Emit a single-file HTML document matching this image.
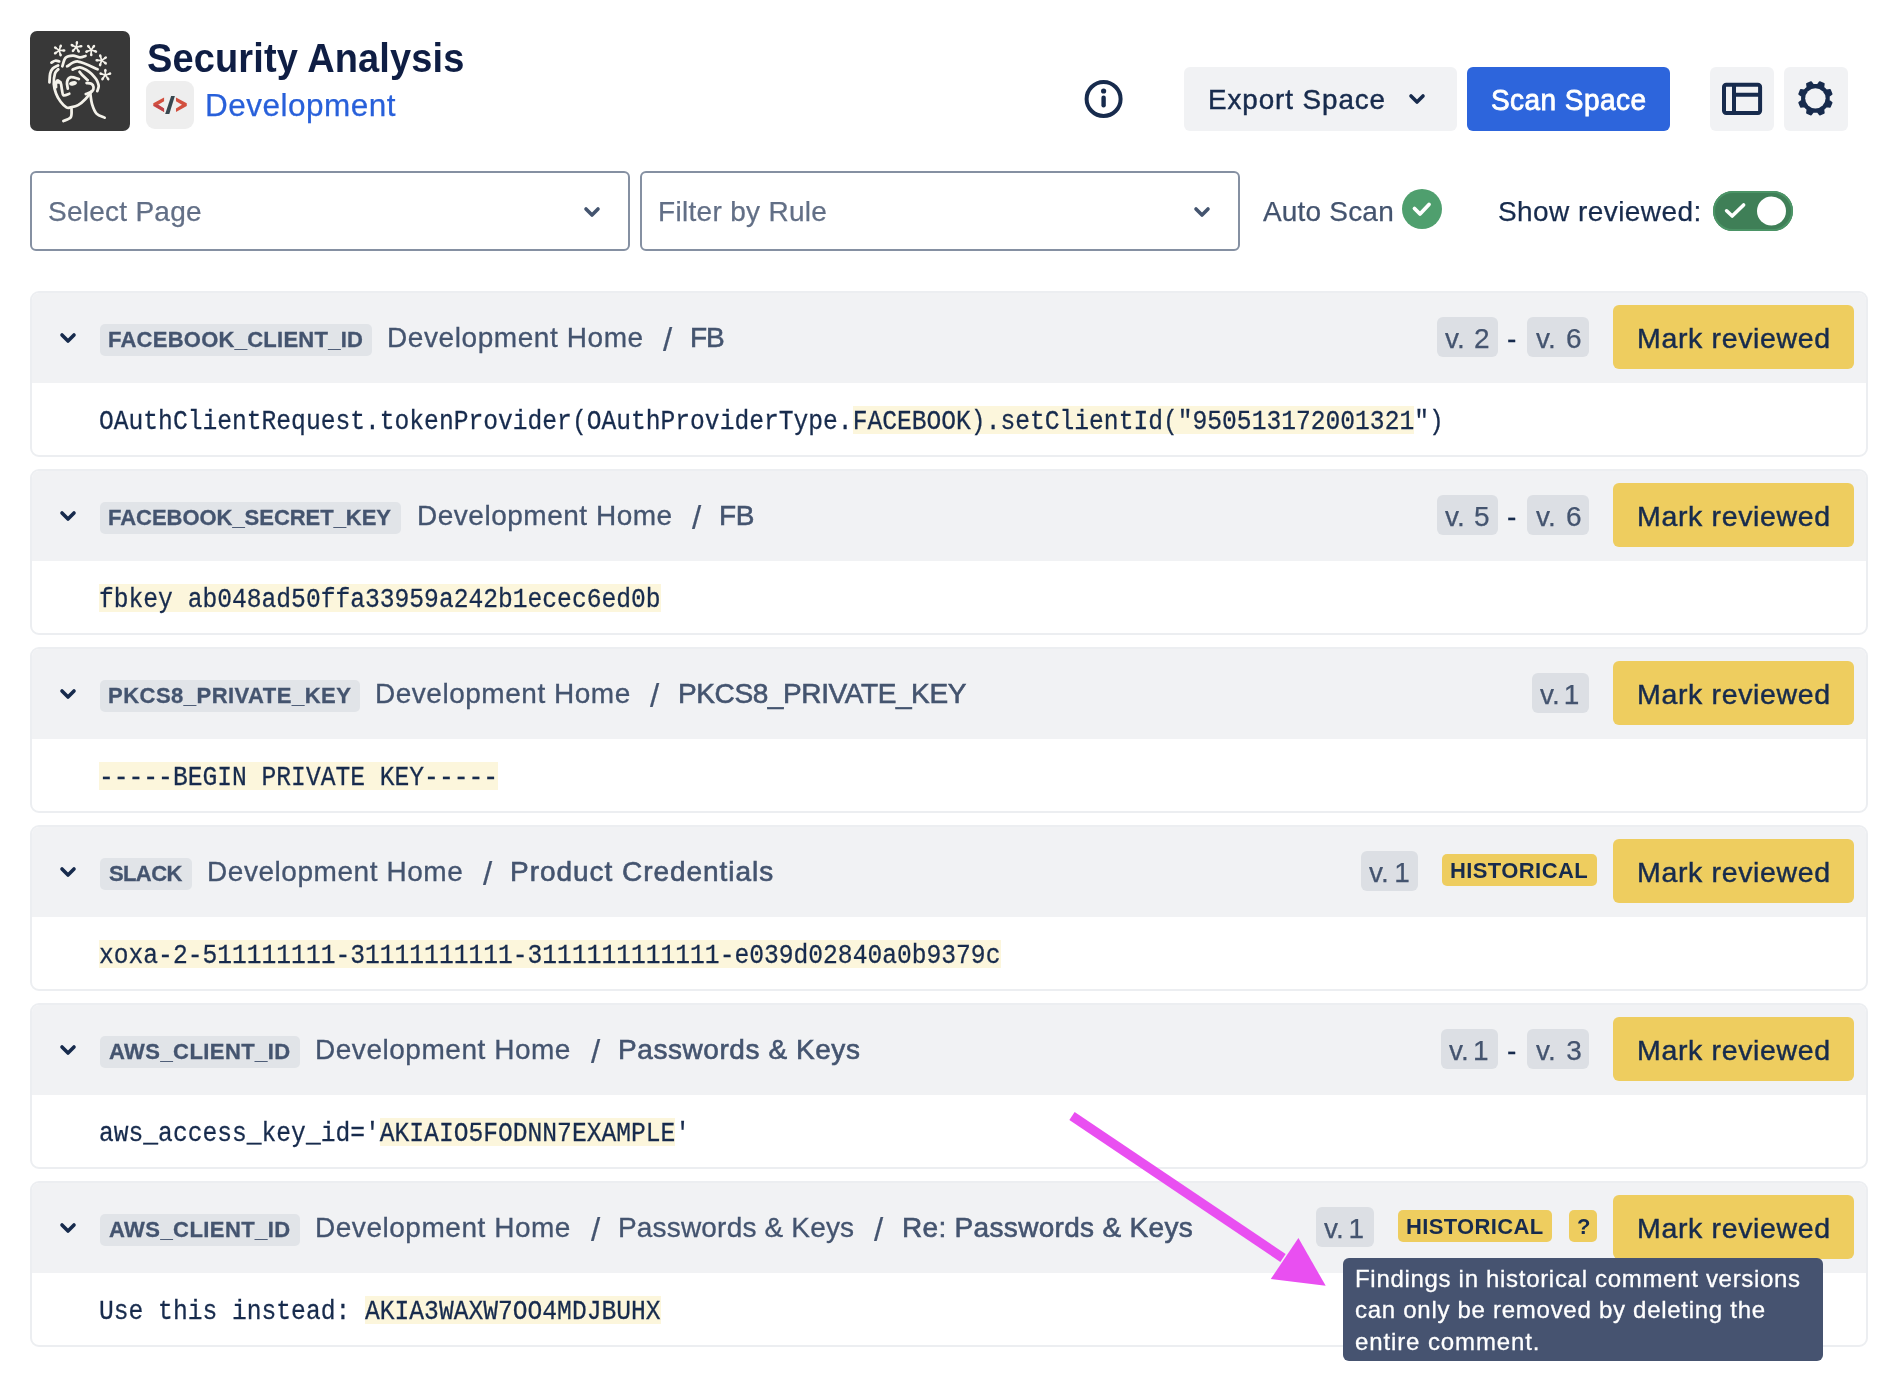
<!DOCTYPE html><html><head><meta charset="utf-8"><style>
*{margin:0;padding:0}
html,body{width:1902px;height:1398px;overflow:hidden;background:#fff}
body{position:relative;font-family:"Liberation Sans", sans-serif;}
.t{position:absolute;white-space:pre;will-change:transform}
.box{position:absolute}
svg{position:absolute}
.card{position:absolute;left:30px;width:1838px;height:166px;box-sizing:border-box;border:2px solid #eceef1;border-radius:9px;overflow:hidden;background:#fff}
.hdr{position:absolute;left:-2px;top:-2px;right:-2px;height:92px;background:#f1f2f4}
.tagbox{height:32px;background:#e1e4e8;border-radius:5px}
.pill{height:40px;background:#dcdfe4;border-radius:6px}
.badge{height:32px;background:#eecd5f;border-radius:5px}
.mark{left:1613px;width:241px;height:64px;background:#eecd5f;border-radius:6px}
.code{position:absolute;left:99px;line-height:24.63px;font-family:"Liberation Mono", monospace;font-size:24.63px;color:#172b4d;white-space:pre;-webkit-text-stroke:0.25px #172b4d;will-change:transform}
.hlbox{height:28px;background:#fcf6dc}
</style></head><body>
<div style="position:absolute;left:30px;top:31px;width:100px;height:100px;background:#383838;border-radius:7px">
<svg width="70" height="90" viewBox="0 0 1087 1398" style="position:absolute;left:15px;top:4px">
<g fill="#f4f2ea"><path d="M220 240 L162 197" stroke="#f4f2ea" stroke-width="26" stroke-linecap="round"/><ellipse cx="162" cy="197" rx="26" ry="20" transform="rotate(-143 162 197)"/><path d="M220 240 L243 172" stroke="#f4f2ea" stroke-width="26" stroke-linecap="round"/><ellipse cx="243" cy="172" rx="26" ry="20" transform="rotate(-71 243 172)"/><path d="M220 240 L292 241" stroke="#f4f2ea" stroke-width="26" stroke-linecap="round"/><ellipse cx="292" cy="241" rx="26" ry="20" transform="rotate(1 292 241)"/><path d="M220 240 L241 309" stroke="#f4f2ea" stroke-width="26" stroke-linecap="round"/><ellipse cx="241" cy="309" rx="26" ry="20" transform="rotate(73 241 309)"/><path d="M220 240 L161 281" stroke="#f4f2ea" stroke-width="26" stroke-linecap="round"/><ellipse cx="161" cy="281" rx="26" ry="20" transform="rotate(145 161 281)"/><path d="M486 189 L421 159" stroke="#f4f2ea" stroke-width="26" stroke-linecap="round"/><ellipse cx="421" cy="159" rx="26" ry="20" transform="rotate(-155 421 159)"/><path d="M486 189 L495 118" stroke="#f4f2ea" stroke-width="26" stroke-linecap="round"/><ellipse cx="495" cy="118" rx="26" ry="20" transform="rotate(-83 495 118)"/><path d="M486 189 L557 175" stroke="#f4f2ea" stroke-width="26" stroke-linecap="round"/><ellipse cx="557" cy="175" rx="26" ry="20" transform="rotate(-11 557 175)"/><path d="M486 189 L521 252" stroke="#f4f2ea" stroke-width="26" stroke-linecap="round"/><ellipse cx="521" cy="252" rx="26" ry="20" transform="rotate(61 521 252)"/><path d="M486 189 L437 242" stroke="#f4f2ea" stroke-width="26" stroke-linecap="round"/><ellipse cx="437" cy="242" rx="26" ry="20" transform="rotate(133 437 242)"/><path d="M717 234 L674 176" stroke="#f4f2ea" stroke-width="26" stroke-linecap="round"/><ellipse cx="674" cy="176" rx="26" ry="20" transform="rotate(-127 674 176)"/><path d="M717 234 L758 175" stroke="#f4f2ea" stroke-width="26" stroke-linecap="round"/><ellipse cx="758" cy="175" rx="26" ry="20" transform="rotate(-55 758 175)"/><path d="M717 234 L786 255" stroke="#f4f2ea" stroke-width="26" stroke-linecap="round"/><ellipse cx="786" cy="255" rx="26" ry="20" transform="rotate(17 786 255)"/><path d="M717 234 L718 306" stroke="#f4f2ea" stroke-width="26" stroke-linecap="round"/><ellipse cx="718" cy="306" rx="26" ry="20" transform="rotate(89 718 306)"/><path d="M717 234 L649 257" stroke="#f4f2ea" stroke-width="26" stroke-linecap="round"/><ellipse cx="649" cy="257" rx="26" ry="20" transform="rotate(161 649 257)"/><path d="M880 394 L859 325" stroke="#f4f2ea" stroke-width="26" stroke-linecap="round"/><ellipse cx="859" cy="325" rx="26" ry="20" transform="rotate(-107 859 325)"/><path d="M880 394 L939 353" stroke="#f4f2ea" stroke-width="26" stroke-linecap="round"/><ellipse cx="939" cy="353" rx="26" ry="20" transform="rotate(-35 939 353)"/><path d="M880 394 L938 437" stroke="#f4f2ea" stroke-width="26" stroke-linecap="round"/><ellipse cx="938" cy="437" rx="26" ry="20" transform="rotate(37 938 437)"/><path d="M880 394 L857 462" stroke="#f4f2ea" stroke-width="26" stroke-linecap="round"/><ellipse cx="857" cy="462" rx="26" ry="20" transform="rotate(109 857 462)"/><path d="M880 394 L808 393" stroke="#f4f2ea" stroke-width="26" stroke-linecap="round"/><ellipse cx="808" cy="393" rx="26" ry="20" transform="rotate(181 808 393)"/><path d="M937 623 L937 551" stroke="#f4f2ea" stroke-width="26" stroke-linecap="round"/><ellipse cx="937" cy="551" rx="26" ry="20" transform="rotate(-90 937 551)"/><path d="M937 623 L1005 601" stroke="#f4f2ea" stroke-width="26" stroke-linecap="round"/><ellipse cx="1005" cy="601" rx="26" ry="20" transform="rotate(-18 1005 601)"/><path d="M937 623 L979 681" stroke="#f4f2ea" stroke-width="26" stroke-linecap="round"/><ellipse cx="979" cy="681" rx="26" ry="20" transform="rotate(54 979 681)"/><path d="M937 623 L895 681" stroke="#f4f2ea" stroke-width="26" stroke-linecap="round"/><ellipse cx="895" cy="681" rx="26" ry="20" transform="rotate(126 895 681)"/><path d="M937 623 L869 601" stroke="#f4f2ea" stroke-width="26" stroke-linecap="round"/><ellipse cx="869" cy="601" rx="26" ry="20" transform="rotate(198 869 601)"/></g>
<g fill="none" stroke="#f4f2ea" stroke-linecap="round" stroke-linejoin="round" stroke-width="43"><path d="M100 429 C110 424 140 403 160 400 C180 397 210 408 220 409"/><path d="M203 474 C189 482 140 499 120 520 C100 541 88 564 80 600 C72 636 71 712 69 735"/><path d="M269 486 C278 464 292 382 320 354 C348 326 397 321 434 320 C471 319 510 348 543 349 C576 350 615 330 629 326"/><path d="M343 486 C372 474 435 404 514 412 C593 420 766 512 817 532"/><path d="M429 537 C448 531 500 497 543 503 C586 509 648 546 686 572 C724 598 751 633 772 657 C793 681 802 695 812 718 C822 741 834 767 834 793 C834 819 816 860 812 873"/><path d="M537 572 C544 580 556 600 577 621 C598 642 649 688 663 701"/><path d="M206 532 C197 543 166 561 154 600 C142 639 134 713 137 764 C140 815 154 862 171 907 C188 952 213 997 240 1033 C267 1069 305 1109 332 1124 C359 1139 370 1130 400 1124 C430 1118 476 1112 514 1090 C552 1068 594 1029 629 993 C664 957 710 893 726 873"/><path d="M412 1147 C410 1169 421 1246 400 1278 C379 1310 305 1326 286 1336"/><path d="M703 907 C708 936 716 1026 732 1078 C748 1130 768 1187 800 1221 C832 1255 905 1274 926 1284"/><path d="M171 810 C171 798 165 753 171 736 C177 719 194 704 206 707 C218 710 236 729 246 753 C256 777 256 820 263 850 C270 880 267 924 286 935 C305 946 362 917 377 913"/><path d="M354 833 C352 815 335 754 343 724 C351 694 370 662 400 655 C430 648 505 679 526 684"/><path d="M646 747 C658 749 702 748 720 758 C738 768 752 791 754 810 C756 829 752 855 732 873 C712 891 650 910 634 918"/>
<path d="M180 735 H240"/></g>
<ellipse cx="435" cy="750" rx="62" ry="34" fill="#f4f2ea" transform="rotate(-12 435 750)"/>
</svg></div>
<div class="t" style="left:146.80px;top:40.33px;font-size:38px;line-height:38px;color:#0f1e44;font-weight:700;font-family:'Liberation Sans', sans-serif;letter-spacing:0.119px;transform:scaleY(1.09);transform-origin:0 32.17px;">Security Analysis</div>
<div style="position:absolute;left:146px;top:81px;width:48px;height:48px;background:#eeeeee;border-radius:9px"></div>
<svg style="position:absolute;left:144px;top:79px" width="52" height="52" viewBox="0 0 1398 1398">
<polygon points="540,500 250,655 250,725 540,890 540,790 380,690 540,600" fill="#d2503f"/>
<polygon points="250,700 540,890 540,790 380,690" fill="#c04349"/>
<polygon points="860,500 1150,655 1150,725 860,890 860,790 1020,690 860,600" fill="#d2503f"/>
<polygon points="730,455 830,455 680,940 570,940" fill="#37474f"/>
</svg>
<div class="t" style="left:205.10px;top:89.94px;font-size:31.5px;line-height:31.5px;color:#2860da;font-weight:400;font-family:'Liberation Sans', sans-serif;letter-spacing:0.490px;-webkit-text-stroke:0.25px #2860da;">Development</div>
<svg style="position:absolute;left:1083px;top:78px" width="42" height="42" viewBox="0 0 42 42">
<circle cx="20.6" cy="21" r="17" fill="none" stroke="#172b4d" stroke-width="4"/>
<circle cx="20.6" cy="13" r="2.6" fill="#172b4d"/>
<rect x="18.4" y="17.5" width="4.4" height="12" rx="2.2" fill="#172b4d"/>
</svg>
<div class="box" style="left:1184px;top:67px;width:273px;height:64px;background:#f1f2f4;border-radius:6px"></div>
<div class="t" style="left:1207.80px;top:86.47px;font-size:27.8px;line-height:27.8px;color:#172b4d;font-weight:400;font-family:'Liberation Sans', sans-serif;letter-spacing:0.927px;-webkit-text-stroke:0.45px #172b4d;">Export Space</div>
<svg style="position:absolute;left:1405px;top:90px" width="24" height="20" viewBox="0 0 24 20">
<path d="M6 6 L12 12 L18 6" fill="none" stroke="#172b4d" stroke-width="3.6" stroke-linecap="round" stroke-linejoin="round"/></svg>
<div class="box" style="left:1467px;top:67px;width:203px;height:64px;background:#2d65dc;border-radius:6px"></div>
<div class="t" style="left:1490.50px;top:86.80px;font-size:28px;line-height:28px;color:#ffffff;font-weight:400;font-family:'Liberation Sans', sans-serif;letter-spacing:0.444px;-webkit-text-stroke:0.8px #ffffff;transform:scaleY(1.04);transform-origin:0 23.70px;">Scan Space</div>
<div class="box" style="left:1710px;top:67px;width:64px;height:64px;background:#f1f2f4;border-radius:6px"></div>
<div class="box" style="left:1784px;top:67px;width:64px;height:64px;background:#f1f2f4;border-radius:6px"></div>
<svg style="position:absolute;left:1710px;top:67px" width="64" height="64" viewBox="0 0 64 64">
<rect x="14" y="17.8" width="36.1" height="28.2" rx="2.2" fill="none" stroke="#172b4d" stroke-width="4"/>
<path d="M24 17.8 V46 M24 27.8 H50" stroke="#172b4d" stroke-width="4" fill="none"/>
</svg>
<svg style="position:absolute;left:1784px;top:67px" width="64" height="64" viewBox="0 0 64 64">
<path d="M44.82 33.55 L47.62 35.71 L45.96 39.74 L42.45 39.28 L39.33 42.40 L39.79 45.91 L35.76 47.57 L33.60 44.77 L29.20 44.77 L27.04 47.57 L23.01 45.91 L23.47 42.40 L20.35 39.28 L16.84 39.74 L15.18 35.71 L17.98 33.55 L17.98 29.15 L15.18 26.99 L16.84 22.96 L20.35 23.42 L23.47 20.30 L23.01 16.79 L27.04 15.13 L29.20 17.93 L33.60 17.93 L35.76 15.13 L39.79 16.79 L39.33 20.30 L42.45 23.42 L45.96 22.96 L47.62 26.99 L44.82 29.15 Z" fill="#172b4d" stroke="#172b4d" stroke-width="1.8" stroke-linejoin="round"/>
<circle cx="31.4" cy="31.35" r="10.2" fill="#f1f2f4"/>
</svg>
<div class="box" style="left:30px;top:171px;width:600px;height:80px;border:2px solid #8590a2;border-radius:6px;box-sizing:border-box"></div>
<div class="t" style="left:48.30px;top:198.10px;font-size:28px;line-height:28px;color:#626f86;font-weight:400;font-family:'Liberation Sans', sans-serif;letter-spacing:0.260px;-webkit-text-stroke:0.25px #626f86;">Select Page</div>
<svg style="position:absolute;left:580px;top:200px" width="24" height="24" viewBox="0 0 24 24">
<path d="M6 9 L12 15 L18 9" fill="none" stroke="#44546f" stroke-width="3.6" stroke-linecap="round" stroke-linejoin="round"/></svg>
<div class="box" style="left:640px;top:171px;width:600px;height:80px;border:2px solid #8590a2;border-radius:6px;box-sizing:border-box"></div>
<div class="t" style="left:657.70px;top:198.10px;font-size:28px;line-height:28px;color:#626f86;font-weight:400;font-family:'Liberation Sans', sans-serif;letter-spacing:0.308px;-webkit-text-stroke:0.25px #626f86;">Filter by Rule</div>
<svg style="position:absolute;left:1190px;top:200px" width="24" height="24" viewBox="0 0 24 24">
<path d="M6 9 L12 15 L18 9" fill="none" stroke="#44546f" stroke-width="3.6" stroke-linecap="round" stroke-linejoin="round"/></svg>
<div class="t" style="left:1263.00px;top:198.30px;font-size:28px;line-height:28px;color:#44546f;font-weight:400;font-family:'Liberation Sans', sans-serif;letter-spacing:0.188px;-webkit-text-stroke:0.25px #44546f;">Auto Scan</div>
<svg style="position:absolute;left:1402px;top:189px" width="40" height="40" viewBox="0 0 40 40">
<circle cx="20" cy="20" r="20" fill="#4f9f6e"/>
<path d="M12.5 19.5 L18 25 L27 15.5" fill="none" stroke="#fff" stroke-width="3.8" stroke-linecap="round" stroke-linejoin="round"/></svg>
<div class="t" style="left:1497.80px;top:198.30px;font-size:28px;line-height:28px;color:#172b4d;font-weight:400;font-family:'Liberation Sans', sans-serif;letter-spacing:0.431px;-webkit-text-stroke:0.25px #172b4d;">Show reviewed:</div>
<svg style="position:absolute;left:1712px;top:190px" width="82" height="42" viewBox="0 0 82 42">
<rect x="1" y="1" width="80" height="40" rx="20" fill="#3f7f57"/>
<rect x="2" y="2" width="78" height="38" rx="19" fill="none" stroke="#4b9466" stroke-width="2"/>
<circle cx="59.5" cy="21" r="14.5" fill="#fff"/>
<path d="M14.6 20.8 L20.2 26 L31.6 15" fill="none" stroke="#fff" stroke-width="3.6" stroke-linecap="round" stroke-linejoin="round"/></svg>
<div class="card" style="top:291px"><div class="hdr"></div></div>
<svg style="position:absolute;left:56px;top:327px" width="24" height="22" viewBox="0 0 24 22">
<path d="M6 8 L12 14 L18 8" fill="none" stroke="#172b4d" stroke-width="3.6" stroke-linecap="round" stroke-linejoin="round"/></svg>
<div class="box tagbox" style="left:100px;top:324px;width:271.6px"></div>
<div class="t" style="left:108.20px;top:329.38px;font-size:22px;line-height:22px;color:#44546f;font-weight:700;font-family:'Liberation Sans', sans-serif;letter-spacing:0.253px;-webkit-text-stroke:0.3px #44546f;">FACEBOOK_CLIENT_ID</div>
<div class="t" style="left:386.70px;top:324.30px;font-size:28px;line-height:28px;color:#44546f;font-weight:400;font-family:'Liberation Sans', sans-serif;letter-spacing:0.580px;-webkit-text-stroke:0.3px #44546f;">Development Home</div>
<div class="t" style="left:663.00px;top:323.37px;font-size:33px;line-height:33px;color:#44546f;font-weight:400;font-family:'Liberation Sans', sans-serif;letter-spacing:0.000px;-webkit-text-stroke:0.2px #44546f;">/</div>
<div class="t" style="left:690.20px;top:324.30px;font-size:28px;line-height:28px;color:#44546f;font-weight:400;font-family:'Liberation Sans', sans-serif;letter-spacing:-1.000px;-webkit-text-stroke:0.6px #44546f;">FB</div>
<div class="box pill" style="left:1437px;top:317px;width:61px"></div>
<div class="t" style="left:1445.40px;top:324.70px;font-size:28px;line-height:28px;color:#44546f;font-weight:400;font-family:'Liberation Sans', sans-serif;letter-spacing:0.000px;word-spacing:1.50px;-webkit-text-stroke:0.25px #44546f;">v. 2</div>
<div class="t" style="left:1506.60px;top:324.70px;font-size:28px;line-height:28px;color:#172b4d;font-weight:400;font-family:'Liberation Sans', sans-serif;letter-spacing:0.000px;-webkit-text-stroke:0.25px #172b4d;">-</div>
<div class="box pill" style="left:1527px;top:317px;width:62px"></div>
<div class="t" style="left:1535.60px;top:324.70px;font-size:28px;line-height:28px;color:#44546f;font-weight:400;font-family:'Liberation Sans', sans-serif;letter-spacing:0.000px;word-spacing:2.50px;-webkit-text-stroke:0.25px #44546f;">v. 6</div>
<div class="box mark" style="top:305px"></div>
<div class="t" style="left:1636.90px;top:324.27px;font-size:28.5px;line-height:28.5px;color:#172b4d;font-weight:400;font-family:'Liberation Sans', sans-serif;letter-spacing:0.650px;-webkit-text-stroke:0.45px #172b4d;">Mark reviewed</div>
<div class="box hlbox" style="left:852.78px;top:406.4px;width:561.64px"></div>
<div class="code" style="top:410.12px;transform:scaleY(1.11);transform-origin:0 18.88px">OAuthClientRequest.tokenProvider(OAuthProviderType.FACEBOOK).setClientId("950513172001321")</div>
<div class="card" style="top:469px"><div class="hdr"></div></div>
<svg style="position:absolute;left:56px;top:505px" width="24" height="22" viewBox="0 0 24 22">
<path d="M6 8 L12 14 L18 8" fill="none" stroke="#172b4d" stroke-width="3.6" stroke-linecap="round" stroke-linejoin="round"/></svg>
<div class="box tagbox" style="left:100px;top:502px;width:300.7px"></div>
<div class="t" style="left:108.20px;top:507.38px;font-size:22px;line-height:22px;color:#44546f;font-weight:700;font-family:'Liberation Sans', sans-serif;letter-spacing:-0.033px;-webkit-text-stroke:0.3px #44546f;">FACEBOOK_SECRET_KEY</div>
<div class="t" style="left:416.60px;top:502.30px;font-size:28px;line-height:28px;color:#44546f;font-weight:400;font-family:'Liberation Sans', sans-serif;letter-spacing:0.513px;-webkit-text-stroke:0.3px #44546f;">Development Home</div>
<div class="t" style="left:692.00px;top:501.37px;font-size:33px;line-height:33px;color:#44546f;font-weight:400;font-family:'Liberation Sans', sans-serif;letter-spacing:0.000px;-webkit-text-stroke:0.2px #44546f;">/</div>
<div class="t" style="left:719.40px;top:502.30px;font-size:28px;line-height:28px;color:#44546f;font-weight:400;font-family:'Liberation Sans', sans-serif;letter-spacing:-0.400px;-webkit-text-stroke:0.6px #44546f;">FB</div>
<div class="box pill" style="left:1437px;top:495px;width:61px"></div>
<div class="t" style="left:1445.40px;top:502.70px;font-size:28px;line-height:28px;color:#44546f;font-weight:400;font-family:'Liberation Sans', sans-serif;letter-spacing:0.000px;word-spacing:1.50px;-webkit-text-stroke:0.25px #44546f;">v. 5</div>
<div class="t" style="left:1506.60px;top:502.70px;font-size:28px;line-height:28px;color:#172b4d;font-weight:400;font-family:'Liberation Sans', sans-serif;letter-spacing:0.000px;-webkit-text-stroke:0.25px #172b4d;">-</div>
<div class="box pill" style="left:1527px;top:495px;width:62px"></div>
<div class="t" style="left:1535.60px;top:502.70px;font-size:28px;line-height:28px;color:#44546f;font-weight:400;font-family:'Liberation Sans', sans-serif;letter-spacing:0.000px;word-spacing:2.50px;-webkit-text-stroke:0.25px #44546f;">v. 6</div>
<div class="box mark" style="top:483px"></div>
<div class="t" style="left:1636.90px;top:502.27px;font-size:28.5px;line-height:28.5px;color:#172b4d;font-weight:400;font-family:'Liberation Sans', sans-serif;letter-spacing:0.650px;-webkit-text-stroke:0.45px #172b4d;">Mark reviewed</div>
<div class="box hlbox" style="left:99.00px;top:584.4px;width:561.64px"></div>
<div class="code" style="top:588.12px;transform:scaleY(1.11);transform-origin:0 18.88px">fbkey ab048ad50ffa33959a242b1ecec6ed0b</div>
<div class="card" style="top:647px"><div class="hdr"></div></div>
<svg style="position:absolute;left:56px;top:683px" width="24" height="22" viewBox="0 0 24 22">
<path d="M6 8 L12 14 L18 8" fill="none" stroke="#172b4d" stroke-width="3.6" stroke-linecap="round" stroke-linejoin="round"/></svg>
<div class="box tagbox" style="left:100px;top:680px;width:260.0px"></div>
<div class="t" style="left:108.20px;top:685.38px;font-size:22px;line-height:22px;color:#44546f;font-weight:700;font-family:'Liberation Sans', sans-serif;letter-spacing:0.481px;-webkit-text-stroke:0.3px #44546f;">PKCS8_PRIVATE_KEY</div>
<div class="t" style="left:375.00px;top:680.30px;font-size:28px;line-height:28px;color:#44546f;font-weight:400;font-family:'Liberation Sans', sans-serif;letter-spacing:0.520px;-webkit-text-stroke:0.3px #44546f;">Development Home</div>
<div class="t" style="left:649.70px;top:679.37px;font-size:33px;line-height:33px;color:#44546f;font-weight:400;font-family:'Liberation Sans', sans-serif;letter-spacing:0.000px;-webkit-text-stroke:0.2px #44546f;">/</div>
<div class="t" style="left:678.00px;top:680.30px;font-size:28px;line-height:28px;color:#44546f;font-weight:400;font-family:'Liberation Sans', sans-serif;letter-spacing:-0.394px;-webkit-text-stroke:0.6px #44546f;">PKCS8_PRIVATE_KEY</div>
<div class="box pill" style="left:1532px;top:673px;width:57px"></div>
<div class="t" style="left:1540.40px;top:680.70px;font-size:28px;line-height:28px;color:#44546f;font-weight:400;font-family:'Liberation Sans', sans-serif;letter-spacing:0.000px;word-spacing:-3.80px;-webkit-text-stroke:0.25px #44546f;">v. 1</div>
<div class="box mark" style="top:661px"></div>
<div class="t" style="left:1636.90px;top:680.27px;font-size:28.5px;line-height:28.5px;color:#172b4d;font-weight:400;font-family:'Liberation Sans', sans-serif;letter-spacing:0.650px;-webkit-text-stroke:0.45px #172b4d;">Mark reviewed</div>
<div class="box hlbox" style="left:99.00px;top:762.4px;width:399.06px"></div>
<div class="code" style="top:766.12px;transform:scaleY(1.11);transform-origin:0 18.88px">-----BEGIN PRIVATE KEY-----</div>
<div class="card" style="top:825px"><div class="hdr"></div></div>
<svg style="position:absolute;left:56px;top:861px" width="24" height="22" viewBox="0 0 24 22">
<path d="M6 8 L12 14 L18 8" fill="none" stroke="#172b4d" stroke-width="3.6" stroke-linecap="round" stroke-linejoin="round"/></svg>
<div class="box tagbox" style="left:100px;top:858px;width:91.8px"></div>
<div class="t" style="left:109.20px;top:863.38px;font-size:22px;line-height:22px;color:#44546f;font-weight:700;font-family:'Liberation Sans', sans-serif;letter-spacing:-0.625px;-webkit-text-stroke:0.3px #44546f;">SLACK</div>
<div class="t" style="left:207.00px;top:858.30px;font-size:28px;line-height:28px;color:#44546f;font-weight:400;font-family:'Liberation Sans', sans-serif;letter-spacing:0.553px;-webkit-text-stroke:0.3px #44546f;">Development Home</div>
<div class="t" style="left:483.30px;top:857.37px;font-size:33px;line-height:33px;color:#44546f;font-weight:400;font-family:'Liberation Sans', sans-serif;letter-spacing:0.000px;-webkit-text-stroke:0.2px #44546f;">/</div>
<div class="t" style="left:510.00px;top:858.30px;font-size:28px;line-height:28px;color:#44546f;font-weight:400;font-family:'Liberation Sans', sans-serif;letter-spacing:0.961px;-webkit-text-stroke:0.6px #44546f;">Product Credentials</div>
<div class="box pill" style="left:1361px;top:851px;width:57px"></div>
<div class="t" style="left:1369.20px;top:858.70px;font-size:28px;line-height:28px;color:#44546f;font-weight:400;font-family:'Liberation Sans', sans-serif;letter-spacing:0.000px;word-spacing:-2.20px;-webkit-text-stroke:0.25px #44546f;">v. 1</div>
<div class="box badge" style="left:1442.2px;top:854.2px;width:154.8px"></div>
<div class="t" style="left:1450.30px;top:859.58px;font-size:22px;line-height:22px;color:#172b4d;font-weight:700;font-family:'Liberation Sans', sans-serif;letter-spacing:0.400px;">HISTORICAL</div>
<div class="box mark" style="top:839px"></div>
<div class="t" style="left:1636.90px;top:858.27px;font-size:28.5px;line-height:28.5px;color:#172b4d;font-weight:400;font-family:'Liberation Sans', sans-serif;letter-spacing:0.650px;-webkit-text-stroke:0.45px #172b4d;">Mark reviewed</div>
<div class="box hlbox" style="left:99.00px;top:940.4px;width:901.58px"></div>
<div class="code" style="top:944.12px;transform:scaleY(1.11);transform-origin:0 18.88px">xoxa-2-511111111-31111111111-3111111111111-e039d02840a0b9379c</div>
<div class="card" style="top:1003px"><div class="hdr"></div></div>
<svg style="position:absolute;left:56px;top:1039px" width="24" height="22" viewBox="0 0 24 22">
<path d="M6 8 L12 14 L18 8" fill="none" stroke="#172b4d" stroke-width="3.6" stroke-linecap="round" stroke-linejoin="round"/></svg>
<div class="box tagbox" style="left:100px;top:1036px;width:199.5px"></div>
<div class="t" style="left:109.20px;top:1041.38px;font-size:22px;line-height:22px;color:#44546f;font-weight:700;font-family:'Liberation Sans', sans-serif;letter-spacing:0.433px;-webkit-text-stroke:0.3px #44546f;">AWS_CLIENT_ID</div>
<div class="t" style="left:315.40px;top:1036.30px;font-size:28px;line-height:28px;color:#44546f;font-weight:400;font-family:'Liberation Sans', sans-serif;letter-spacing:0.533px;-webkit-text-stroke:0.3px #44546f;">Development Home</div>
<div class="t" style="left:590.70px;top:1035.37px;font-size:33px;line-height:33px;color:#44546f;font-weight:400;font-family:'Liberation Sans', sans-serif;letter-spacing:0.000px;-webkit-text-stroke:0.2px #44546f;">/</div>
<div class="t" style="left:617.70px;top:1036.30px;font-size:28px;line-height:28px;color:#44546f;font-weight:400;font-family:'Liberation Sans', sans-serif;letter-spacing:0.567px;-webkit-text-stroke:0.6px #44546f;">Passwords &amp; Keys</div>
<div class="box pill" style="left:1441px;top:1029px;width:57px"></div>
<div class="t" style="left:1449.40px;top:1036.70px;font-size:28px;line-height:28px;color:#44546f;font-weight:400;font-family:'Liberation Sans', sans-serif;letter-spacing:0.000px;word-spacing:-3.60px;-webkit-text-stroke:0.25px #44546f;">v. 1</div>
<div class="t" style="left:1506.80px;top:1036.70px;font-size:28px;line-height:28px;color:#172b4d;font-weight:400;font-family:'Liberation Sans', sans-serif;letter-spacing:0.000px;-webkit-text-stroke:0.25px #172b4d;">-</div>
<div class="box pill" style="left:1527px;top:1029px;width:62px"></div>
<div class="t" style="left:1535.70px;top:1036.70px;font-size:28px;line-height:28px;color:#44546f;font-weight:400;font-family:'Liberation Sans', sans-serif;letter-spacing:0.000px;word-spacing:2.70px;-webkit-text-stroke:0.25px #44546f;">v. 3</div>
<div class="box mark" style="top:1017px"></div>
<div class="t" style="left:1636.90px;top:1036.27px;font-size:28.5px;line-height:28.5px;color:#172b4d;font-weight:400;font-family:'Liberation Sans', sans-serif;letter-spacing:0.650px;-webkit-text-stroke:0.45px #172b4d;">Mark reviewed</div>
<div class="box hlbox" style="left:379.82px;top:1118.4px;width:295.60px"></div>
<div class="code" style="top:1122.12px;transform:scaleY(1.11);transform-origin:0 18.88px">aws_access_key_id='AKIAIO5FODNN7EXAMPLE'</div>
<div class="card" style="top:1181px"><div class="hdr"></div></div>
<svg style="position:absolute;left:56px;top:1217px" width="24" height="22" viewBox="0 0 24 22">
<path d="M6 8 L12 14 L18 8" fill="none" stroke="#172b4d" stroke-width="3.6" stroke-linecap="round" stroke-linejoin="round"/></svg>
<div class="box tagbox" style="left:100px;top:1214px;width:199.5px"></div>
<div class="t" style="left:109.20px;top:1219.38px;font-size:22px;line-height:22px;color:#44546f;font-weight:700;font-family:'Liberation Sans', sans-serif;letter-spacing:0.433px;-webkit-text-stroke:0.3px #44546f;">AWS_CLIENT_ID</div>
<div class="t" style="left:315.40px;top:1214.30px;font-size:28px;line-height:28px;color:#44546f;font-weight:400;font-family:'Liberation Sans', sans-serif;letter-spacing:0.533px;-webkit-text-stroke:0.3px #44546f;">Development Home</div>
<div class="t" style="left:590.70px;top:1213.37px;font-size:33px;line-height:33px;color:#44546f;font-weight:400;font-family:'Liberation Sans', sans-serif;letter-spacing:0.000px;-webkit-text-stroke:0.2px #44546f;">/</div>
<div class="t" style="left:617.70px;top:1214.30px;font-size:28px;line-height:28px;color:#44546f;font-weight:400;font-family:'Liberation Sans', sans-serif;letter-spacing:0.180px;-webkit-text-stroke:0.3px #44546f;">Passwords &amp; Keys</div>
<div class="t" style="left:873.80px;top:1213.37px;font-size:33px;line-height:33px;color:#44546f;font-weight:400;font-family:'Liberation Sans', sans-serif;letter-spacing:0.000px;-webkit-text-stroke:0.2px #44546f;">/</div>
<div class="t" style="left:901.50px;top:1214.30px;font-size:28px;line-height:28px;color:#44546f;font-weight:400;font-family:'Liberation Sans', sans-serif;letter-spacing:0.316px;-webkit-text-stroke:0.6px #44546f;">Re: Passwords &amp; Keys</div>
<div class="box pill" style="left:1316px;top:1207px;width:58px"></div>
<div class="t" style="left:1324.40px;top:1214.70px;font-size:28px;line-height:28px;color:#44546f;font-weight:400;font-family:'Liberation Sans', sans-serif;letter-spacing:0.000px;word-spacing:-2.90px;-webkit-text-stroke:0.25px #44546f;">v. 1</div>
<div class="box badge" style="left:1398.2px;top:1210.2px;width:154.3px"></div>
<div class="t" style="left:1406.30px;top:1215.58px;font-size:22px;line-height:22px;color:#172b4d;font-weight:700;font-family:'Liberation Sans', sans-serif;letter-spacing:0.344px;">HISTORICAL</div>
<div class="box badge" style="left:1569px;top:1210.2px;width:28.0px"></div>
<div class="t" style="left:1577.00px;top:1215.58px;font-size:22px;line-height:22px;color:#172b4d;font-weight:700;font-family:'Liberation Sans', sans-serif;letter-spacing:0.000px;">?</div>
<div class="box mark" style="top:1195px"></div>
<div class="t" style="left:1636.90px;top:1214.27px;font-size:28.5px;line-height:28.5px;color:#172b4d;font-weight:400;font-family:'Liberation Sans', sans-serif;letter-spacing:0.650px;-webkit-text-stroke:0.45px #172b4d;">Mark reviewed</div>
<div class="box hlbox" style="left:365.04px;top:1296.4px;width:295.60px"></div>
<div class="code" style="top:1300.12px;transform:scaleY(1.11);transform-origin:0 18.88px">Use this instead: AKIA3WAXW7OO4MDJBUHX</div>
<svg style="position:absolute;left:0;top:0" width="1902" height="1398" viewBox="0 0 1902 1398">
<path d="M1072 1116 L1283 1258" stroke="#e94ff1" stroke-width="9.5" fill="none"/>
<polygon points="1325.7,1285.8 1270.8,1279 1298.4,1238" fill="#e94ff1"/>
</svg>
<div class="box" style="left:1343px;top:1258px;width:480px;height:103px;background:#465370;border-radius:6px"></div>
<div class="t" style="left:1355.00px;top:1266.88px;font-size:24px;line-height:24px;color:#ffffff;font-weight:400;font-family:'Liberation Sans', sans-serif;letter-spacing:0.692px;-webkit-text-stroke:0.3px #ffffff;">Findings in historical comment versions</div>
<div class="t" style="left:1355.00px;top:1297.78px;font-size:24px;line-height:24px;color:#ffffff;font-weight:400;font-family:'Liberation Sans', sans-serif;letter-spacing:0.721px;-webkit-text-stroke:0.3px #ffffff;">can only be removed by deleting the</div>
<div class="t" style="left:1355.00px;top:1329.98px;font-size:24px;line-height:24px;color:#ffffff;font-weight:400;font-family:'Liberation Sans', sans-serif;letter-spacing:0.886px;-webkit-text-stroke:0.3px #ffffff;">entire comment.</div>
</body></html>
